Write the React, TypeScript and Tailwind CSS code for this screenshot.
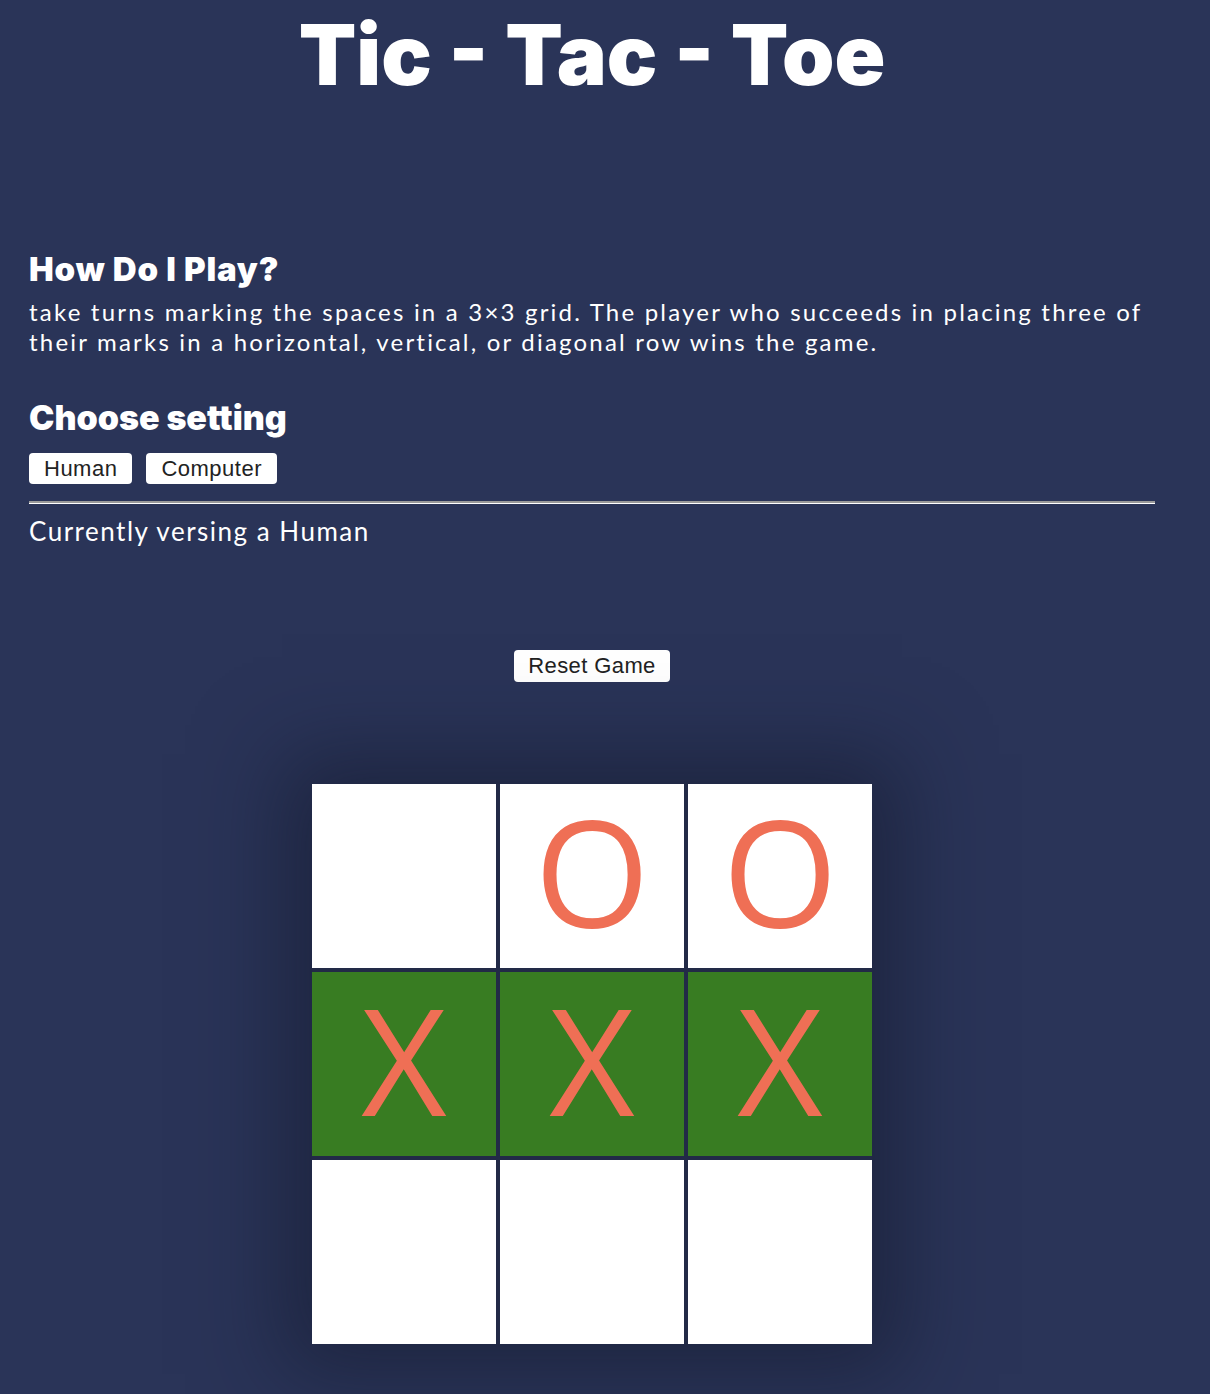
const board = ['', 'O', 'O', 'X', 'X', 'X', '', '', ''];
const winning = [3, 4, 5];

const App = () => {
  return (
    <div className="min-h-[1394px] bg-[#2a3458] text-white pl-[29px] pr-[55px]" style={{ fontFamily: 'Lato, "Open Sans", sans-serif' }}>
      <h1 className="text-center text-[84px] leading-[110px] font-black font-['Inter',sans-serif]">
        Tic - Tac - Toe
      </h1>

      {/* rules + settings */}
      <section className="mt-[139px]">
        <h2 className="text-[33px] leading-[40px] font-black font-['Inter',sans-serif] tracking-[0.8px]">How Do I Play?</h2>
        <p className="text-[24px] leading-[30px] mt-[8px] tracking-[2.2px] font-['Lato',sans-serif]">
          take turns marking the spaces in a 3×3 grid. The player who succeeds in placing three of their marks in a horizontal, vertical, or diagonal row wins the game.
        </p>

        <h2 className="text-[34px] leading-[40px] font-black mt-[41px] font-['Inter',sans-serif]">Choose setting</h2>
        <div className="flex gap-[14px] mt-[15px]">
          <button className="bg-white text-[#222] text-[22px] leading-[31px] px-[15px] tracking-[0.5px] rounded-[4px] font-['Liberation_Sans',sans-serif]">Human</button>
          <button className="bg-white text-[#222] text-[22px] leading-[31px] px-[15px] tracking-[0.5px] rounded-[4px] font-['Liberation_Sans',sans-serif]">Computer</button>
        </div>
        <hr className="mt-[17px] border-t-2 border-t-[#9a9a9a] border-b border-b-white" />
        <p className="text-[26px] leading-[34px] mt-[10px] tracking-[1.5px]">Currently versing a Human</p>
      </section>

      <div className="flex justify-center mt-[102px]">
        <button className="bg-white text-[#222] text-[22px] leading-[32px] px-[14px] tracking-[0.4px] rounded-[4px] font-['Liberation_Sans',sans-serif]">Reset Game</button>
      </div>

      {/* board */}
      <div className="flex justify-center mt-[102px]">
        <div className="grid grid-cols-3 gap-[4px] bg-[#222a47] shadow-[0_0_80px_30px_rgba(20,25,45,0.55)]">
          {board.map((cell, i) => (
            <div
              key={i}
              className={`w-[184px] h-[184px] pb-[10px] flex items-center justify-center text-[148px] text-[#ef6f55] font-['Open_Sans',sans-serif] ${winning.includes(i) ? 'bg-[#387c22]' : 'bg-white'}`}
            >
              {cell}
            </div>
          ))}
        </div>
      </div>
    </div>
  );
};

export default App;
